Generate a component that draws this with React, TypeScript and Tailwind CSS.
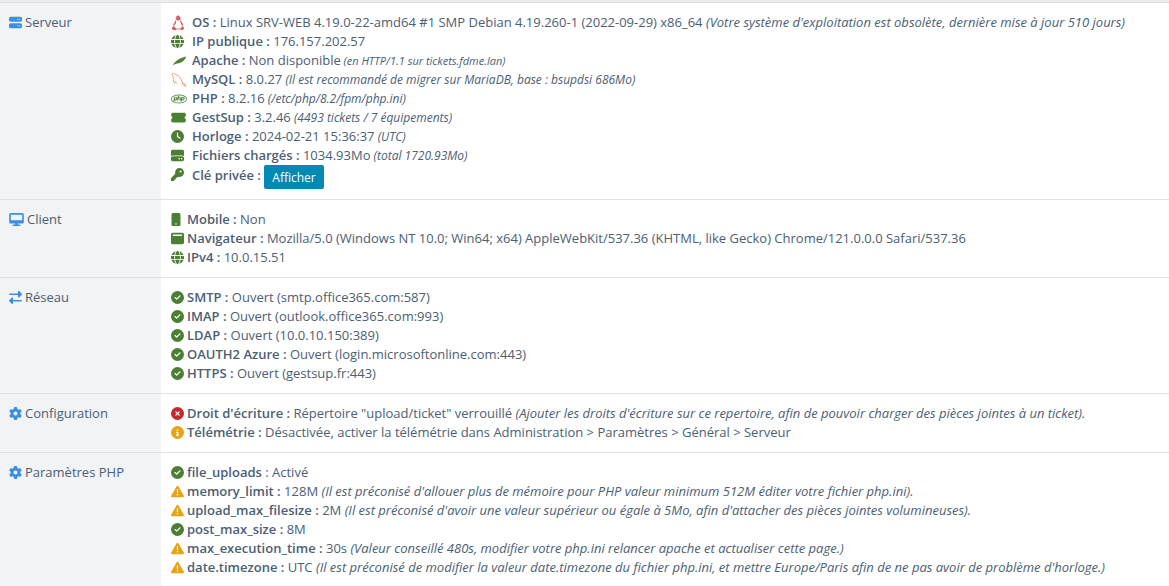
import type { ReactNode } from "react";
import {
  FaCircleCheck,
  FaCircleInfo,
  FaCircleXmark,
  FaClock,
  FaDesktop,
  FaGear,
  FaGlobe,
  FaHardDrive,
  FaKey,
  FaMobileButton,
  FaPhp,
  FaRightLeft,
  FaServer,
  FaTicketSimple,
  FaTriangleExclamation,
  FaWindowMaximize,
} from "react-icons/fa6";

const green = "size-[13px] text-[#4b7f33]";
const blue = "size-[13px] text-[#3a8fe0]";

const Penguin = () => (
  <svg viewBox="0 0 14 16" className="h-4 w-[14px]" fill="none">
    <path
      d="M5.2 4.2C5 2 5.8.9 7.1.9s2.1 1.1 2 3.2c.1 1.6 2.6 4 2.6 6.8 0 1.2-.6 2.4-1.4 3H4c-.9-.7-1.4-1.7-1.4-3C2.6 8.3 5.3 6 5.2 4.2Z"
      fill="#fff"
      stroke="#df8388"
    />
    <path d="M5.4 1.8C5.9.7 8.3.7 8.9 1.9l.1 2.8c-1 .9-2.500.9-3.600 0Z" fill="#d55a62" />
    <path d="M4.800 6.800 3.400 10M9.700 6.600l1.500 3.400" stroke="#c94149" />
    <path
      d="m1.200 12.200 2.100-.6 2 2.700-.8 1-3.500-.7ZM12.900 12.400l-2-.8-1.600 2.900.9.800 2.900-1.300Z"
      fill="#e0525a"
    />
  </svg>
);

const Feather = () => (
  <svg viewBox="0 0 16 12" className="h-3 w-4">
    <path
      d="M1.500 10.400C4 6.200 8 3 15 1.400c-.3 3.100-4.400 6.400-8.700 7.200-1.800.3-3 .8-4.800 1.800Z"
      fill="#4b7f33"
    />
    <path d="M4 8.600C7 6.300 9.800 4.400 13 2.700" stroke="#6d9c55" strokeWidth=".4" fill="none" />
  </svg>
);

const Dolphin = () => (
  <svg viewBox="0 0 16 16" className="size-4" fill="none" stroke="#f2a272" strokeLinecap="round">
    <path d="M3.3 10.8C1.8 8.500 2.500 6.300 1.800 4.200 1.300 2.900.8 1.500 2 1.300c1.100-.1 1.500.9 2.600 1.200 4 1.100 5.500 4.400 6.500 7.400.4 1.100 1.200 1.500 2.200 2.100" />
    <path d="M3.300 10.800c.6.6 1-.7 1.200-1.300.6 1 1 1.900 1.900 2.500" />
    <path d="M11.600 11.300c-.2 1 .3 1.400 1.300 1.800.8.4 1.300 1 2 1.600M13.300 12c1 .2 1.300 1 1.500 1.600" />
  </svg>
);

const Ok = () => <FaCircleCheck className={green} />;
const Warning = () => <FaTriangleExclamation className="size-[13px] text-[#e8a317]" />;

type LineProps = {
  icon: ReactNode;
  label: ReactNode;
  children: ReactNode;
  note?: string;
  noteSize?: string;
  wide?: boolean;
};

const Line = ({ icon, label, children, note, noteSize = "text-[13px]", wide }: LineProps) => (
  <li className="flex items-start">
    <span className={`flex h-[19px] shrink-0 items-center ${wide ? "w-[21px]" : "w-4"}`}>
      {icon}
    </span>
    <span>
      <strong className="font-semibold">{label}</strong> {children}
      {note && <i className={noteSize}> {note}</i>}
    </span>
  </li>
);

type SectionProps = { icon: ReactNode; title: string; children: ReactNode };

const Section = ({ icon, title, children }: SectionProps) => (
  <tr className="border-t border-[#dee2e5] align-top">
    <th scope="row" className="w-[161px] bg-[#f1f3f5] px-[9px] py-[10px] text-left font-normal">
      <span className="flex items-center gap-[3px]">
        {icon}
        {title}
      </span>
    </th>
    <td className="px-[10px] py-[10px]">
      <ul>{children}</ul>
    </td>
  </tr>
);

const App = () => {
  return (
    <main className="border-t-2 border-[#ebedef] bg-white font-['Open_Sans',sans-serif] text-[13px] leading-[19px] text-[#4b6074]">
      <table className="w-full border-collapse">
        <tbody>
          <Section icon={<FaServer className={blue} />} title="Serveur">
            <Line
              wide
              icon={<Penguin />}
              label="OS :"
              note="(Votre système d'exploitation est obsolète, dernière mise à jour 510 jours)"
            >
              Linux SRV-WEB 4.19.0-22-amd64 #1 SMP Debian 4.19.260-1 (2022-09-29) x86_64
            </Line>
            <Line wide icon={<FaGlobe className={green} />} label="IP publique :">
              176.157.202.57
            </Line>
            <Line
              wide
              icon={<Feather />}
              label="Apache :"
              note="(en HTTP/1.1 sur tickets.fdme.lan)"
              noteSize="text-[11px]"
            >
              Non disponible
            </Line>
            <Line
              wide
              icon={<Dolphin />}
              label="MySQL :"
              note="(Il est recommandé de migrer sur MariaDB, base : bsupdsi 686Mo)"
              noteSize="text-[12px]"
            >
              8.0.27
            </Line>
            <Line
              wide
              icon={<FaPhp className="size-4 stroke-[#4b7f33] stroke-[10px] text-[#4b7f33]" />}
              label="PHP :"
              note="(/etc/php/8.2/fpm/php.ini)"
              noteSize="text-[12px]"
            >
              8.2.16
            </Line>
            <Line
              wide
              icon={<FaTicketSimple className="h-[13px] w-[15px] text-[#4b7f33]" />}
              label="GestSup :"
              note="(4493 tickets / 7 équipements)"
              noteSize="text-[12px]"
            >
              3.2.46
            </Line>
            <Line
              wide
              icon={<FaClock className={green} />}
              label="Horloge :"
              note="(UTC)"
              noteSize="text-[12px]"
            >
              2024-02-21 15:36:37
            </Line>
            <Line
              wide
              icon={<FaHardDrive className={green} />}
              label="Fichiers chargés :"
              note="(total 1720.93Mo)"
              noteSize="text-[12px]"
            >
              1034.93Mo
            </Line>
            <Line wide icon={<FaKey className={green} />} label="Clé privée :">
              <button
                type="button"
                className="h-6 cursor-pointer rounded-xs bg-[#028ab3] px-2 align-middle text-[12px] text-white hover:bg-[#027a9f]"
              >
                Afficher
              </button>
            </Line>
          </Section>

          <Section
            icon={<FaDesktop className="h-[13px] w-[15px] text-[#3a8fe0]" />}
            title="Client"
          >
            <Line icon={<FaMobileButton className="h-[13px] w-[10px] text-[#4b7f33]" />} label="Mobile :">
              Non
            </Line>
            <Line icon={<FaWindowMaximize className={green} />} label="Navigateur :">
              Mozilla/5.0 (Windows NT 10.0; Win64; x64) AppleWebKit/537.36 (KHTML, like Gecko)
              Chrome/121.0.0.0 Safari/537.36
            </Line>
            <Line icon={<FaGlobe className={green} />} label="IPv4 :">
              10.0.15.51
            </Line>
          </Section>

          <Section icon={<FaRightLeft className={blue} />} title="Réseau">
            <Line icon={<Ok />} label="SMTP :">
              Ouvert (smtp.office365.com:587)
            </Line>
            <Line icon={<Ok />} label="IMAP :">
              Ouvert (outlook.office365.com:993)
            </Line>
            <Line icon={<Ok />} label="LDAP :">
              Ouvert (10.0.10.150:389)
            </Line>
            <Line icon={<Ok />} label="OAUTH2 Azure :">
              Ouvert (login.microsoftonline.com:443)
            </Line>
            <Line icon={<Ok />} label="HTTPS :">
              Ouvert (gestsup.fr:443)
            </Line>
          </Section>

          <Section icon={<FaGear className={blue} />} title="Configuration">
            <Line
              icon={<FaCircleXmark className="size-[13px] text-[#c5282d]" />}
              label="Droit d'écriture :"
              note="(Ajouter les droits d'écriture sur ce repertoire, afin de pouvoir charger des pièces jointes à un ticket)."
            >
              Répertoire "upload/ticket" verrouillé
            </Line>
            <Line icon={<FaCircleInfo className="size-[13px] text-[#e8a317]" />} label="Télémétrie :">
              Désactivée, activer la télémétrie dans Administration &gt; Paramètres &gt; Général &gt;
              Serveur
            </Line>
          </Section>

          <Section icon={<FaGear className={blue} />} title="Paramètres PHP">
            <Line
              icon={<Ok />}
              label={
                <>
                  file_uploads <span className="font-normal">:</span>
                </>
              }
            >
              Activé
            </Line>
            <Line
              icon={<Warning />}
              label="memory_limit :"
              note="(Il est préconisé d'allouer plus de mémoire pour PHP valeur minimum 512M éditer votre fichier php.ini)."
            >
              128M
            </Line>
            <Line
              icon={<Warning />}
              label="upload_max_filesize :"
              note="(Il est préconisé d'avoir une valeur supérieur ou égale à 5Mo, afin d'attacher des pièces jointes volumineuses)."
            >
              2M
            </Line>
            <Line icon={<Ok />} label="post_max_size :">
              8M
            </Line>
            <Line
              icon={<Warning />}
              label="max_execution_time :"
              note="(Valeur conseillé 480s, modifier votre php.ini relancer apache et actualiser cette page.)"
            >
              30s
            </Line>
            <Line
              icon={<Warning />}
              label="date.timezone :"
              note="(Il est préconisé de modifier la valeur date.timezone du fichier php.ini, et mettre Europe/Paris afin de ne pas avoir de problème d'horloge.)"
            >
              UTC
            </Line>
          </Section>
        </tbody>
      </table>
    </main>
  );
};

export default App;
